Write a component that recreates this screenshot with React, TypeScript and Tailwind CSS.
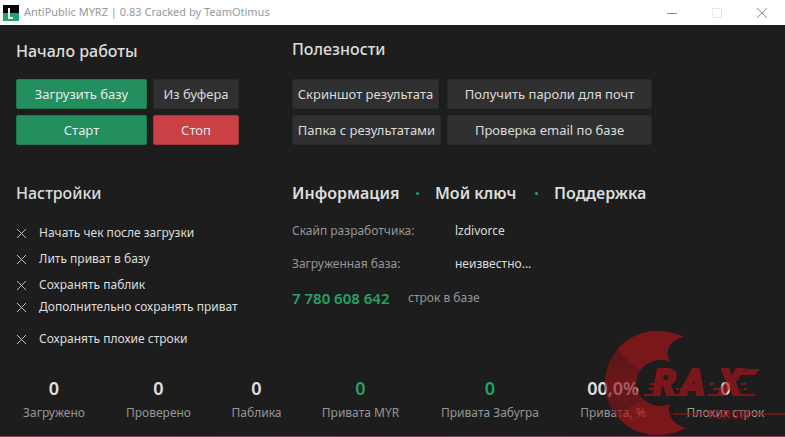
import type { ReactNode } from 'react';

const actionBase = 'h-[30px] whitespace-nowrap rounded-xs border text-[13px] leading-5';
const green = 'border-[#1f7a50] bg-[#238f5e] text-[#e6ebe8]';
const red = 'border-[#a93739] bg-[#c94144] text-[#f0e4e4]';
const gray = 'border-[#292929] bg-[#303030] text-[#dcdcdc]';

function Action({ tone, width, children }: { tone: string; width: string; children: ReactNode }) {
  return (
    <button type="button" className={`${actionBase} ${tone} ${width}`}>
      {children}
    </button>
  );
}

function Cross() {
  return (
    <svg aria-hidden="true" viewBox="0 0 11 11" className="col-start-1 row-start-1 size-[11px] peer-checked:hidden">
      <path d="M1 1l9 9M10 1l-9 9" stroke="#bdbdbd" strokeWidth="1" fill="none" />
    </svg>
  );
}

function Option({ label, space }: { label: string; space: string }) {
  return (
    <label className={`flex h-5 items-center gap-3 text-xs text-[#dedede] ${space}`}>
      <span className="grid size-[11px] place-items-center">
        <input type="checkbox" className="peer col-start-1 row-start-1 size-[11px] appearance-none" />
        <Cross />
      </span>
      {label}
    </label>
  );
}

const options = [
  { label: 'Начать чек после загрузки', space: 'mt-0' },
  { label: 'Лить приват в базу', space: 'mt-1.5' },
  { label: 'Сохранять паблик', space: 'mt-1.5' },
  { label: 'Дополнительно сохранять приват', space: 'mt-0.5' },
  { label: 'Сохранять плохие строки', space: 'mt-3' },
];

const stats = [
  { value: '0', label: 'Загружено', width: 'w-16', color: 'text-[#e0e0e0]' },
  { value: '0', label: 'Проверено', width: 'w-[69px]', color: 'text-[#e0e0e0]' },
  { value: '0', label: 'Паблика', width: 'w-[51px]', color: 'text-[#e0e0e0]' },
  { value: '0', label: 'Привата MYR', width: 'w-[81px]', color: 'text-[#22a468]' },
  { value: '0', label: 'Привата Забугра', width: 'w-[102px]', color: 'text-[#22a468]' },
  { value: '00,0%', label: 'Привата, %', width: 'w-[68px]', color: 'text-[#e0e0e0]' },
  { value: '0', label: 'Плохих строк', width: 'w-[81px]', color: 'text-[#e0e0e0]' },
];

function Dot() {
  return <span className="size-[3px] rounded-full bg-[#22a468]" />;
}

function Watermark() {
  return (
    <svg
      aria-hidden="true"
      viewBox="0 0 185 109"
      className="pointer-events-none absolute right-0 bottom-0 h-[109px] w-[185px] opacity-65"
    >
      <defs>
        <clipPath id="crescent">
          <path d="M84 9C67 13 65 25 70 34A24 23 0 1 0 70 76C66 86 74 98 86 100Q72 107 57 107A52 52 0 0 1 57 3Q72 3 84 9Z" />
        </clipPath>
        <linearGradient id="shade" x1="0" y1="0" x2="0" y2="1">
          <stop offset="0.3" stopColor="#84151a" />
          <stop offset="0.5" stopColor="#981418" />
          <stop offset="0.75" stopColor="#7c151a" />
        </linearGradient>
      </defs>
      <g clipPath="url(#crescent)">
        <rect width="100" height="109" fill="url(#shade)" />
        <ellipse cx="56" cy="18" rx="40" ry="26" fill="#ad1419" transform="rotate(14 56 18)" />
        <ellipse cx="60" cy="93" rx="44" ry="24" fill="#ad1419" transform="rotate(-10 60 93)" />
      </g>
      <g
        fill="#ad1419"
        stroke="#ad1419"
        strokeWidth="2"
        fontFamily="Roboto, sans-serif"
        fontWeight="900"
        fontStyle="italic"
        fontSize="36"
      >
        <text x="53" y="67">R</text>
        <text x="81" y="67">A</text>
        <text x="119" y="67">X</text>
      </g>
      <path
        fill="#ad1419"
        d="M50 55h9v2h-9zM49 60h8v2h-8zM44 66h12v2H44zM76 60h3v2h-3zM70 66h14v2H70zM80 60h7v2h-7zM110 55h4v2h-4zM113 60h8v2h-8zM108 66h12v2h-12zM141 55h5v2h-5zM144 60h3v2h-3zM140 66h15v2h-15zM60 41h9v3h-9zM146 41h14l-5 6h-14z"
      />
      <path fill="#941318" d="M73 85h32v2H73zM150 85h35v2h-35z" />
      <text x="108" y="91" fill="#a01318" fontFamily="Roboto, sans-serif" fontWeight="900" fontSize="12">
        FORUM
      </text>
    </svg>
  );
}

export default function App() {
  return (
    <div className="relative flex min-h-screen flex-col overflow-hidden bg-[#1d1d1d] font-['Noto_Sans','Open_Sans',sans-serif]">
      <header className="flex h-[25px] items-center bg-white pl-[3px] text-[11px] text-[#999999]">
        <svg aria-hidden="true" viewBox="0 0 16 16" className="mr-[5px] size-4">
          <path fill="#050505" d="M0 0h16v8H0z" />
          <path fill="#22a468" d="M0 8h16v8H0z" />
          <path d="M6 3v10h4" fill="none" stroke="#fff" strokeWidth="2" />
        </svg>
        <h1 className="grow">AntiPublic MYRZ | 0.83 Cracked by TeamOtimus</h1>
        <button type="button" aria-label="Свернуть" className="grid h-full w-[45px] place-items-center">
          <svg viewBox="0 0 12 12" className="size-3">
            <path d="M1 6.5h10" stroke="#8f8f8f" />
          </svg>
        </button>
        <button type="button" aria-label="Развернуть" disabled className="grid h-full w-[45px] place-items-center">
          <svg viewBox="0 0 12 12" className="size-3">
            <path d="M1.5 1.5h9v9h-9z" stroke="#e0ebe8" fill="none" />
          </svg>
        </button>
        <button type="button" aria-label="Закрыть" className="grid h-full w-[46px] place-items-center">
          <svg viewBox="0 0 12 12" className="size-3">
            <path d="M1 1l10 10M11 1L1 11" stroke="#8c8c8c" />
          </svg>
        </button>
      </header>

      <main className="grid grid-cols-[276px_1fr] gap-y-9 px-4 pt-3.5 text-[#dcdcdc]">
        <section>
          <h2 className="text-base font-medium">Начало работы</h2>
          <div className="mt-4 flex gap-1.5">
            <Action tone={green} width="w-[131px]">Загрузить базу</Action>
            <Action tone={gray} width="w-[86px]">Из буфера</Action>
          </div>
          <div className="mt-1.5 flex gap-1.5">
            <Action tone={green} width="w-[131px]">Старт</Action>
            <Action tone={red} width="w-[86px]">Стоп</Action>
          </div>
        </section>

        <section className="-mt-0.5">
          <h2 className="text-base font-medium">Полезности</h2>
          <div className="mt-[18px] flex gap-2">
            <Action tone={gray} width="w-[147px]">Скриншот результата</Action>
            <Action tone={gray} width="w-[205px]">Получить пароли для почт</Action>
          </div>
          <div className="mt-1.5 flex gap-1.5">
            <Action tone={gray} width="w-[149px]">Папка с результатами</Action>
            <Action tone={gray} width="w-[205px]">Проверка email по базе</Action>
          </div>
        </section>

        <section>
          <h2 className="mb-[18px] text-base font-medium">Настройки</h2>
          {options.map((o) => (
            <Option key={o.label} {...o} />
          ))}
        </section>

        <section>
          <nav className="flex items-center gap-4 text-base font-semibold">
            <button type="button" className="w-[108px] text-left whitespace-nowrap">Информация</button>
            <Dot />
            <button type="button" className="w-[84px] text-left whitespace-nowrap">Мой ключ</button>
            <Dot />
            <button type="button">Поддержка</button>
          </nav>
          <dl className="mt-4 grid grid-cols-[163px_1fr] gap-y-[13px] text-xs leading-5">
            <dt className="text-[#969696]">Скайп разработчика:</dt>
            <dd>lzdivorce</dd>
            <dt className="text-[#969696]">Загруженная база:</dt>
            <dd>неизвестно...</dd>
          </dl>
          <p className="mt-3.5 flex items-center text-xs leading-5 text-[#969696]">
            <strong className="w-[116px] text-[15px] leading-5 font-semibold text-[#22a468]">7 780 608 642</strong>
            строк в базе
          </p>
        </section>
      </main>

      <footer className="mt-auto flex gap-[38px] pb-[13px] pl-[22px] text-center">
        {stats.map((s) => (
          <div key={s.label} className={`flex shrink-0 flex-col items-center gap-[3px] ${s.width}`}>
            <output className={`text-lg leading-6 font-semibold ${s.color}`}>{s.value}</output>
            <span className="text-xs leading-5 whitespace-nowrap text-[#969696]">{s.label}</span>
          </div>
        ))}
      </footer>
      <div className="h-px bg-linear-to-r from-[#8a4565] via-[#6a4560] to-[#8a4565]" />
      <Watermark />
    </div>
  );
}
